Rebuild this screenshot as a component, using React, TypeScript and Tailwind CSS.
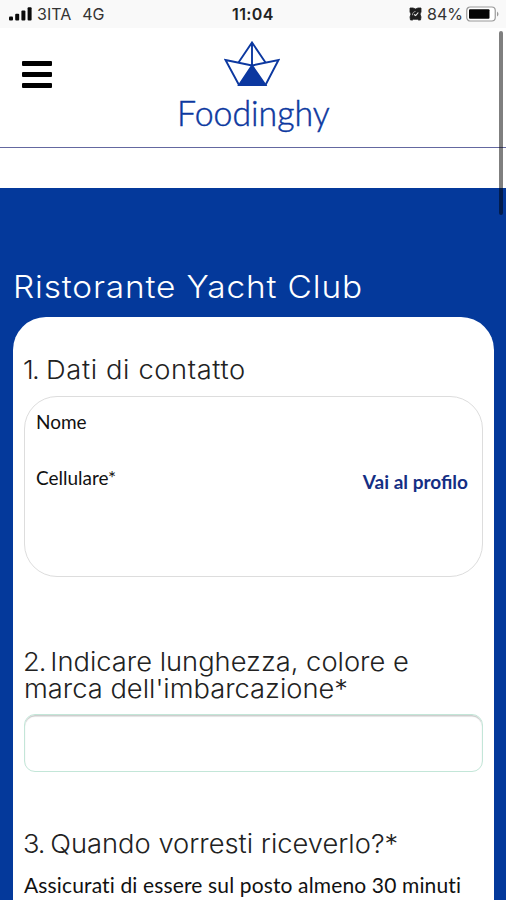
import React from 'react';

const StatusBar: React.FC = () => (
    <div className="h-7 shrink-0 bg-[#f9f9f9] flex items-center justify-between pl-[9px] pr-[7px] font-['Inter',sans-serif] text-[#333] relative">
        <div className="flex items-center">
            <svg width="23" height="14" viewBox="0 0 23 14" fill="#0a0a0a">
                <rect x="0" y="9.5" width="4" height="4" rx="1" />
                <rect x="6.2" y="6.8" width="4" height="6.7" rx="1" />
                <rect x="12.4" y="3.6" width="4" height="9.9" rx="1" />
                <rect x="18.6" y="0.3" width="4" height="13.2" rx="1" />
            </svg>
            <span className="text-[16px] ml-[5px]">3ITA</span>
            <span className="text-[16px] ml-[11px]">4G</span>
        </div>
        <span className="absolute left-[232px] text-[16px] font-semibold tracking-[0.4px] text-[#222]">11:04</span>
        <div className="flex items-center">
            {/* Alarm */}
            <svg width="13" height="14" viewBox="0 0 13 14">
                <path d="M1 1h3l2.500 1L9 1h3v4l-1 2 1 3-.5 3H9.500l-1-.7h-4l-1 .7H1.500L1 10l1-3-1-2z" fill="#1d1d1d" stroke="#1d1d1d" strokeWidth="0.8" />
                <path d="M3.500 8.200a3.200 3.200 0 0 1 3-3.700" stroke="#aaa" strokeWidth="0.9" fill="none" />
                <path d="M5 7.500l1.700 1L9.300 5.500" stroke="#eee" strokeWidth="1.100" fill="none" />
            </svg>
            <span className="text-[16px] ml-[5px]">84%</span>
            <svg className="ml-[3px]" width="33" height="16" viewBox="0 0 33 16">
                <rect x="0.75" y="1" width="28.500" height="14" rx="3.500" fill="#fff" stroke="#999" strokeWidth="1.200" />
                <rect x="3" y="3.300" width="20.500" height="9.400" rx="1" fill="#050505" />
                <path d="M31 5.500q1.500 1 1.500 2.500T31 10.500z" fill="#999" />
            </svg>
        </div>
    </div>
);

const Logo: React.FC = () => (
    <div className="absolute left-[177px] top-[13px] text-[#0c38a0]">
        <svg className="ml-[47px]" width="56" height="46" viewBox="0 0 56 46" fill="none" stroke="currentColor" strokeWidth="1.900" strokeLinejoin="miter">
            <path d="M1.500 19L28 24.500 54.500 19 41.500 44H15z" />
            <path d="M14.500 21.500L28 1.500l13.500 20M28 1.500v23" />
            <path d="M28 24.500L15 44h26.500z" fill="currentColor" />
        </svg>
        <div className="font-['Lato',sans-serif] font-light text-[36px] leading-[42px] mt-[4px] whitespace-nowrap origin-left scale-x-[0.94] [-webkit-text-stroke:0.5px_currentColor]">Foodinghy</div>
    </div>
);

const Header: React.FC = () => (
    <header className="relative h-[120px] shrink-0 border-b border-[#6468a0]">
        <button aria-label="Menu" className="absolute left-[22px] top-[33px] w-[30px] flex flex-col gap-[6px]">
            <span className="h-[5px] rounded-[1px] bg-black" />
            <span className="h-[5px] rounded-[1px] bg-black" />
            <span className="h-[5px] rounded-[1px] bg-black" />
        </button>
        <Logo />
    </header>
);

const heading = "font-['Inter',sans-serif] font-light text-[26px] leading-[27px] text-[#222] whitespace-nowrap origin-left scale-x-105";

const App: React.FC = () => (
    <div className="relative w-[506px] h-[900px] overflow-hidden bg-white flex flex-col">
        <StatusBar />
        <Header />
        <main className="mt-[40px] grow bg-[#04399b] pl-[13px] pr-[12px] pt-[81px]">
            <h1 className="font-['Inter',sans-serif] font-light text-[31px] leading-[36px] tracking-[0.8px] text-white whitespace-nowrap origin-left scale-x-[1.077]">Ristorante Yacht Club</h1>
            <div className="mt-[12px] h-[620px] rounded-t-[33px] bg-white px-[11px] pt-[39px] font-['Lato',sans-serif] text-[19px] text-[#111]">
                <h2 className={`${heading} tracking-[0.6px]`}>
                    <span className="inline-block w-[21px] -ml-px mr-px tracking-[-1.500px]">1.</span>Dati di contatto
                </h2>
                <div className="mt-[13px] h-[181px] rounded-[33px] border-[1.500px] border-[#ddd] px-[11px] pt-[13px] flex justify-between">
                    <div className="flex flex-col gap-[32px] leading-6">
                        <span>Nome</span>
                        <span>Cellulare*</span>
                    </div>
                    <a className="mt-[60px] pr-[3px] leading-6 font-bold text-[#142e84]">Vai al profilo</a>
                </div>
                <h2 className={`${heading} mt-[71px]`}>
                    <span className="inline-block w-[26px] -ml-px tracking-[-1px]">2.</span>Indicare lunghezza, colore e<br />
                    marca dell'imbarcazione*
                </h2>
                <input className="block mt-[12px] w-full h-[58px] rounded-[11px] border-[1.500px] border-[#c3e6d8] shadow-[inset_0_1.500px_1px_#ccc] outline-none px-3" />
                <h2 className={`${heading} mt-[58px]`}>
                    <span className="inline-block w-[26px] -ml-px tracking-[-1px]">3.</span>Quando vorresti riceverlo?*
                </h2>
                <p className="mt-[16px] text-[21px] leading-6 tracking-[0.14px] whitespace-nowrap [font-variant-ligatures:none]">Assicurati di essere sul posto almeno 30 minuti</p>
            </div>
        </main>
        {/* Scroll indicator */}
        <div className="absolute left-[499px] top-[31px] w-[4px] h-[184px] rounded-full bg-black/50" />
    </div>
);

export default App;
